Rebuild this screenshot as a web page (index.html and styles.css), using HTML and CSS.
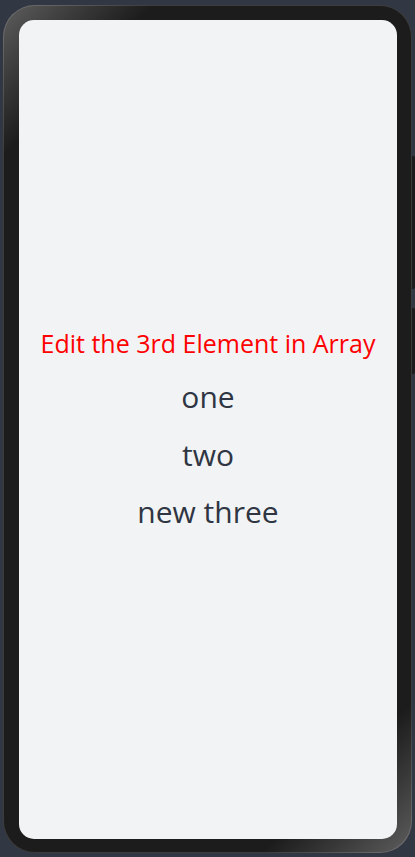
FILE: index.html
```html
<!DOCTYPE html>
<html lang="en">
<head>
<meta charset="utf-8">
<title>Edit the 3rd Element in Array</title>
<link rel="stylesheet" href="styles.css">
</head>
<body>
  <div class="phone">
    <div class="btn btn-top"></div>
    <div class="btn btn-bottom"></div>
    <div class="screen">
      <div class="content">
        <div class="title">Edit the 3rd Element in Array</div>
        <div class="item">one</div>
        <div class="item">two</div>
        <div class="item">new three</div>
      </div>
    </div>
  </div>
</body>
</html>
```

FILE: styles.css
```css
html, body {
  margin: 0;
  padding: 0;
  height: 100%;
  background: #323744;
}

body {
  padding: 5px 3px 4px 3px;
  box-sizing: border-box;
  font-family: "Open Sans", "Noto Sans", sans-serif;
}

.phone {
  position: relative;
  width: 409px;
  height: 848px;
  box-sizing: border-box;
  border-radius: 32px;
  padding: 15px 15px 14px 16px;
  background: linear-gradient(135deg, #5e5e5e 0%, #3c3c3c 6%, #1c1c1c 12%, #1c1c1c 88%, #3c3c3c 94%, #5e5e5e 100%);
  box-shadow: inset 0 0 0 1px rgba(255, 255, 255, 0.14);
}

.btn {
  position: absolute;
  right: -3px;
  width: 3px;
  background: #1c1c1c;
  border-radius: 0 2px 2px 0;
}

.btn-top {
  top: 151px;
  height: 133px;
}

.btn-bottom {
  top: 303px;
  height: 66px;
}

.screen {
  width: 100%;
  height: 100%;
  background: #f1f3f5;
  border-radius: 15px;
  display: flex;
  flex-direction: column;
  justify-content: center;
  align-items: center;
}

.content {
  display: flex;
  flex-direction: column;
  align-items: center;
  padding-top: 8px;
}

.title {
  color: #ff0000;
  font-size: 25px;
  line-height: 34px;
  margin-bottom: 8px;
  white-space: nowrap;
}

.item {
  color: #2f3542;
  font-size: 30px;
  line-height: 57.5px;
  white-space: nowrap;
}
```
